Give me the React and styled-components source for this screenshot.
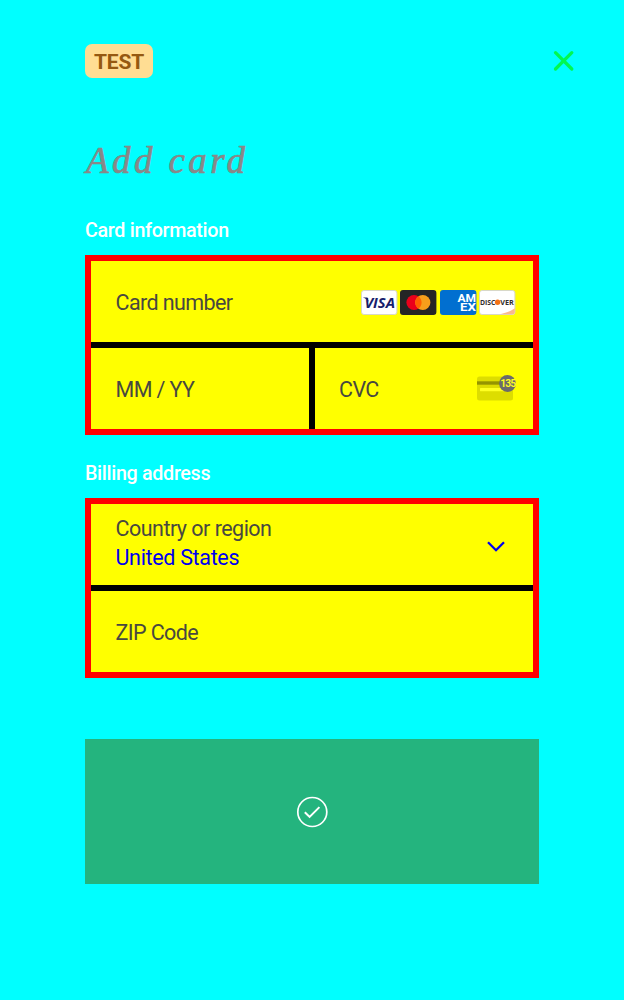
import React from "react";
import styled, { createGlobalStyle } from "styled-components";

const GlobalStyle = createGlobalStyle`
  * { box-sizing: border-box; }
  body { margin: 0; background: #00ffff; font-family: Roboto, "Liberation Sans", sans-serif; }
  svg { display: block; overflow: visible; }
`;

const Sheet = styled.main`
  height: 1000px;
  padding: 44px 85px 0;
  background: #00ffff;
  overflow: hidden;
`;

const TopBar = styled.header`
  display: flex;
  align-items: flex-start;
  justify-content: space-between;
  height: 34px;
  margin-right: -36px;
`;

const TestBadge = styled.span`
  width: 68px;
  height: 34px;
  border-radius: 7px;
  background: #ffdd93;
  color: #955911;
  font-size: 21px;
  font-weight: 700;
  line-height: 36px;
  letter-spacing: -0.2px;
  text-align: center;
`;

const CloseButton = styled.button`
  margin: 6px 0 0;
  padding: 0;
  border: 0;
  background: none;
`;

const Title = styled.h1`
  height: 54px;
  margin: 56px 0 0;
  padding-left: 1px;
  color: #888888;
  font-family: "Liberation Serif", serif;
  font-size: 37px;
  font-style: italic;
  font-weight: 400;
  line-height: 54px;
  letter-spacing: 3.4px;
  -webkit-text-stroke: 0.7px #888888;
  white-space: nowrap;
`;

const SectionLabel = styled.h2`
  height: 24px;
  margin: ${(p) => p.$top}px 0 12px;
  color: #ffffff;
  font-size: 19.7px;
  font-weight: 500;
  line-height: 24px;
  letter-spacing: -0.31px;
`;

const FieldGroup = styled.section`
  height: 180px;
  border: 6px solid #ff0000;
  background: #000000;
  display: grid;
  grid-template-rows: 81px 81px;
  gap: 6px;
`;

const SplitRow = styled.div`
  display: grid;
  grid-template-columns: 218px 218px;
  gap: 6px;
`;

const Field = styled.div`
  display: flex;
  align-items: center;
  justify-content: space-between;
  padding: 0 17px 0 ${(p) => p.$left || 24.5}px;
  background: #ffff00;
`;

const Placeholder = styled.span`
  color: #484840;
  font-size: 21.5px;
  line-height: 28px;
  letter-spacing: -0.6px;
  padding-top: 2px;
`;

const SelectText = styled.div`
  display: flex;
  flex-direction: column;
  margin-top: -4px;
  color: #484840;
  font-size: 21.5px;
  line-height: 29px;
  letter-spacing: -0.52px;
`;

const SelectValue = styled.span`
  color: #0000ee;
  letter-spacing: -0.33px;
`;

const Brands = styled.div`
  display: flex;
  gap: 3px;
  margin: 2px 0.4px 0 0;
`;

const CvcHint = styled.span`
  margin: -1px -1px 0 0;
`;

const ChevronBox = styled.span`
  margin: 4px 10px 0 0;
`;

const SubmitButton = styled.button`
  display: flex;
  align-items: center;
  justify-content: center;
  width: 100%;
  height: 145px;
  margin-top: 61px;
  padding: 0;
  border: 0;
  background: #24b47e;
`;

const Lettering = styled.text`
  font-family: ${(p) => (p.$narrow ? "Roboto" : '"Open Sans"')}, "Noto Sans", sans-serif;
`;

function Visa() {
  return (
    <svg width="36.4" height="25" viewBox="0 0 36.4 25">
      <rect x=".5" y=".5" width="35.4" height="24" rx="2.5" fill="#fff" stroke="#d8d8c8" />
      <Lettering x="3.4" y="17.8" fontSize="15" fontWeight="700" fontStyle="italic" textLength="30.6" lengthAdjust="spacingAndGlyphs" fill="#171e6c">VISA</Lettering>
      <path d="M1.8 7.4h4.6l1.5 4.6C6.7 9.8 4.7 8.3 1.8 7.4z" fill="#171e6c" />
    </svg>
  );
}

function Mastercard() {
  return (
    <svg width="36.4" height="25" viewBox="0 0 36.4 25">
      <rect width="36.4" height="25" rx="3" fill="#252525" />
      <circle cx="14" cy="12.5" r="7.6" fill="#eb001b" />
      <circle cx="22.8" cy="12.5" r="7.6" fill="#f79e1b" />
      <path d="M18.4 6.3a7.6 7.6 0 0 1 0 12.4 7.6 7.6 0 0 1 0-12.4z" fill="#ff5f00" />
    </svg>
  );
}

function Amex() {
  return (
    <svg width="36.4" height="25" viewBox="0 0 36.4 25">
      <rect width="36.4" height="25" rx="3" fill="#016fd0" />
      <g fontSize="11" fontWeight="700" fill="#fff">
        <Lettering $narrow x="17.4" y="12" textLength="18.6" lengthAdjust="spacingAndGlyphs">AM</Lettering>
        <Lettering $narrow x="20" y="21.2" textLength="16" lengthAdjust="spacingAndGlyphs">EX</Lettering>
      </g>
    </svg>
  );
}

function Discover() {
  return (
    <svg width="36.4" height="25" viewBox="0 0 36.4 25">
      <rect x=".5" y=".5" width="35.4" height="24" rx="2.5" fill="#fff" stroke="#d8d8c8" />
      <path d="M21 24.3c6-1.3 10.8-3.2 14.8-6V22a2.3 2.3 0 0 1-2.3 2.3z" fill="#f9b98d" />
      <g fontSize="7.6" fontWeight="700" fill="#302c2b">
        <Lettering x="1" y="14.9" textLength="15.4" lengthAdjust="spacingAndGlyphs">DISC</Lettering>
        <Lettering x="21.2" y="14.9" textLength="13.6" lengthAdjust="spacingAndGlyphs">VER</Lettering>
      </g>
      <circle cx="18.6" cy="12.2" r="2.7" fill="#f47216" />
    </svg>
  );
}

function CvcCard() {
  return (
    <svg width="40" height="26" viewBox="0 0 40 26">
      <rect x="0" y="1.5" width="36" height="24" rx="2.5" fill="#dddd00" />
      <rect x="0" y="6.3" width="36" height="3.4" fill="#949400" />
      <rect x="3" y="13" width="24" height="3.3" rx=".5" fill="#ffff22" />
      <circle cx="30.5" cy="8.5" r="8.4" fill="#6b6b6b" />
      <Lettering $narrow x="23.2" y="12.2" fontSize="10.4" fontWeight="600" letterSpacing="-0.9" fill="#ffff22">135</Lettering>
    </svg>
  );
}

export default function App() {
  return (
    <>
      <GlobalStyle />
      <Sheet>
        <TopBar>
          <TestBadge>TEST</TestBadge>
          <CloseButton aria-label="Close">
            <svg width="22" height="22" viewBox="0 0 22 22">
              <path d="M2.5 2.7l16.3 16.3M18.8 2.7L2.5 19" stroke="#00f850" strokeWidth="3.3" strokeLinecap="round" />
            </svg>
          </CloseButton>
        </TopBar>
        <Title>Add card</Title>
        <SectionLabel $top={31}>Card information</SectionLabel>
        <FieldGroup>
          <Field>
            <Placeholder>Card number</Placeholder>
            <Brands><Visa /><Mastercard /><Amex /><Discover /></Brands>
          </Field>
          <SplitRow>
            <Field><Placeholder>MM / YY</Placeholder></Field>
            <Field $left={24}>
              <Placeholder>CVC</Placeholder>
              <CvcHint><CvcCard /></CvcHint>
            </Field>
          </SplitRow>
        </FieldGroup>
        <SectionLabel $top={27}>Billing address</SectionLabel>
        <FieldGroup>
          <Field>
            <SelectText>
              <span>Country or region</span>
              <SelectValue>United States</SelectValue>
            </SelectText>
            <ChevronBox>
              <svg width="20" height="13" viewBox="0 0 20 13">
                <path d="M2 2.2l8 8 8-8" fill="none" stroke="#0000ee" strokeWidth="2.3" />
              </svg>
            </ChevronBox>
          </Field>
          <Field><Placeholder>ZIP Code</Placeholder></Field>
        </FieldGroup>
        <SubmitButton aria-label="Card added">
          <svg width="32" height="32" viewBox="0 0 32 32" fill="none" stroke="#fff">
            <circle cx="16.3" cy="16" r="14.5" strokeWidth="1.7" />
            <path d="M8.8 16.2l4.8 4.7 9.8-9.8" strokeWidth="2" />
          </svg>
        </SubmitButton>
      </Sheet>
    </>
  );
}
